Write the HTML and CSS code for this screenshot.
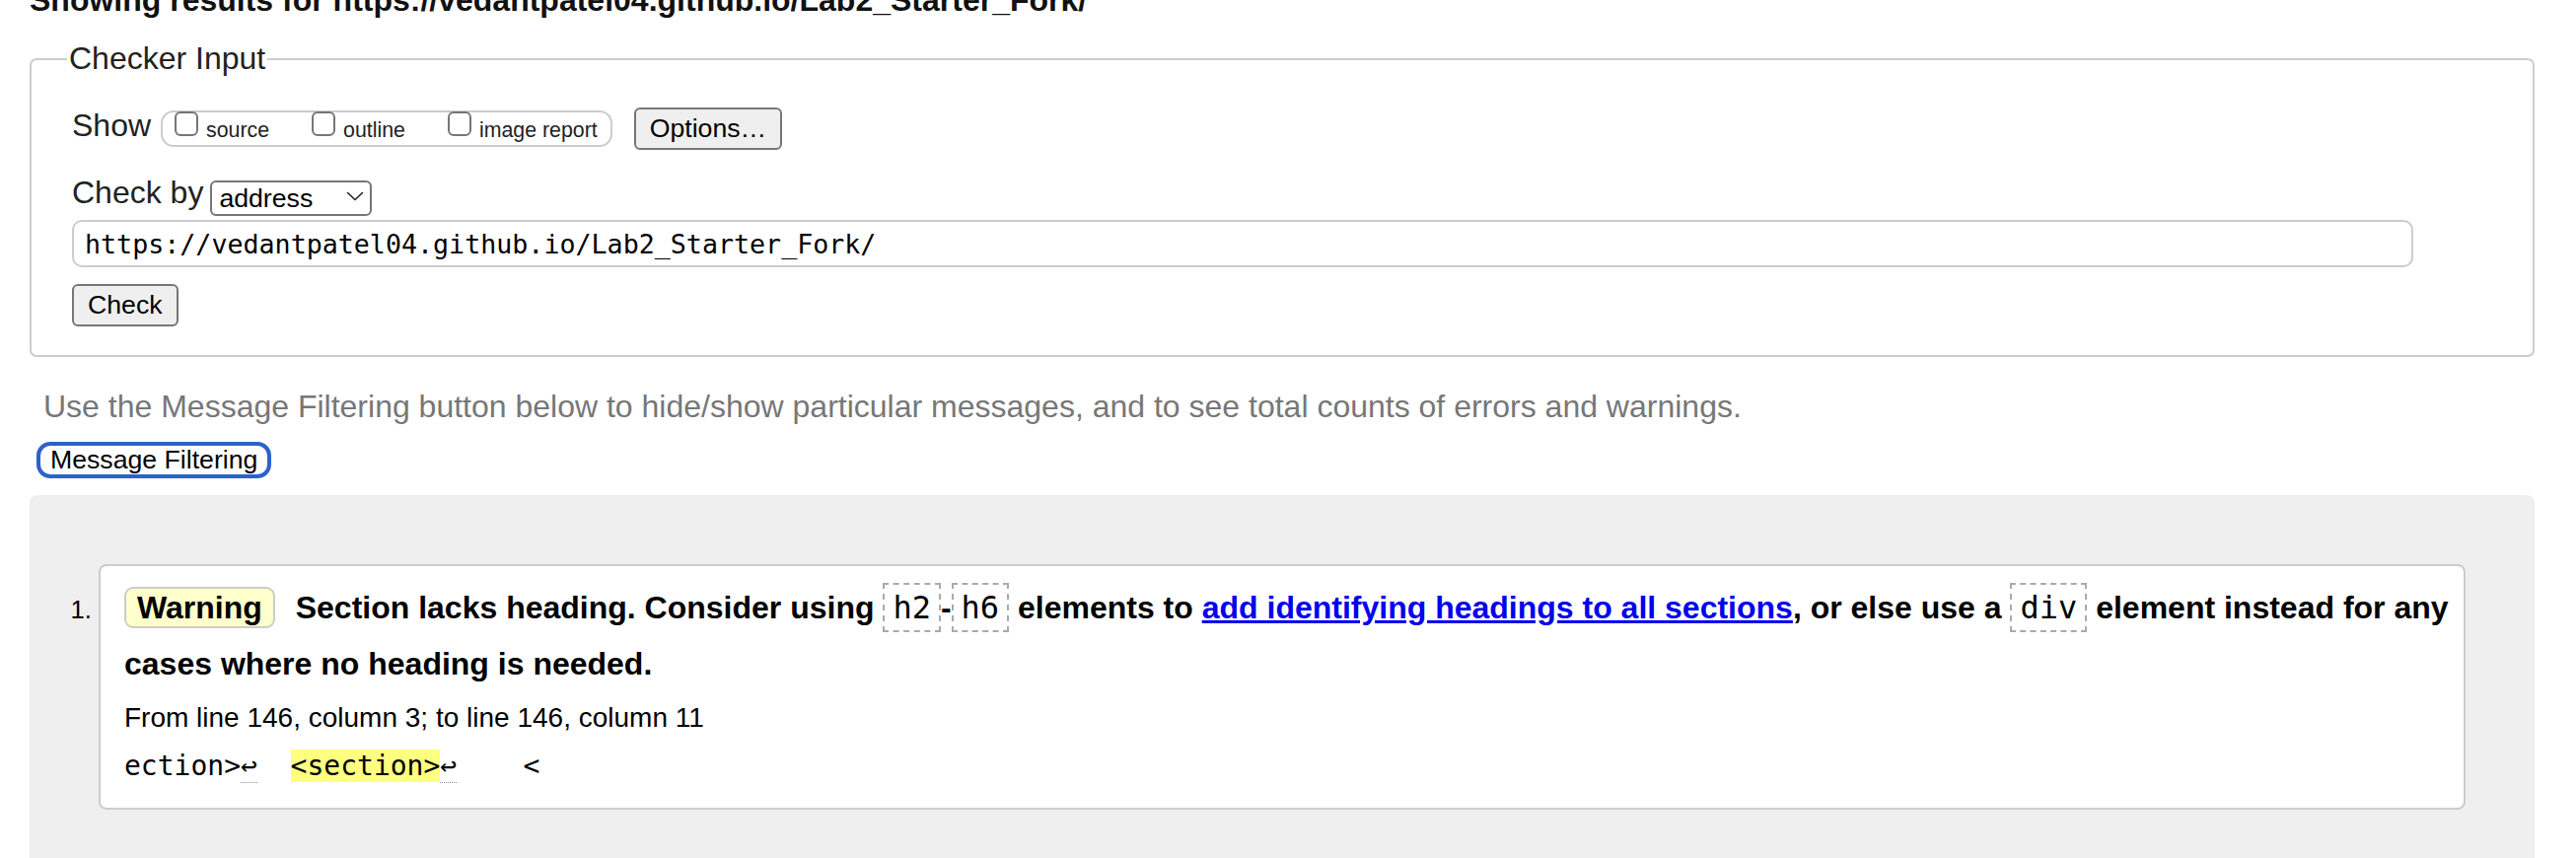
FILE: index.html
```html
<!DOCTYPE html>
<html lang="en">
<head>
<meta charset="utf-8">
<title>Showing results for https://vedantpatel04.github.io/Lab2_Starter_Fork/ - Nu Html Checker</title>
<link rel="stylesheet" href="styles.css">
</head>
<body>
<main class="page">
  <h2 class="results-title">Showing results for https://vedantpatel04.github.io/Lab2_Starter_Fork/</h2>
  <form class="checker-form">
    <fieldset class="checker">
      <legend class="checker-legend">Checker Input</legend>
      <div class="row row-show">
        <span class="row-label label-show">Show</span>
        <span class="show-opts">
          <label class="opt"><input type="checkbox" class="cb"><span class="opt-text">source</span></label>
          <label class="opt"><input type="checkbox" class="cb"><span class="opt-text">outline</span></label>
          <label class="opt"><input type="checkbox" class="cb"><span class="opt-text">image report</span></label>
        </span>
        <button type="button" class="btn btn-options">Options…</button>
      </div>
      <div class="row row-checkby">
        <span class="row-label label-checkby">Check by</span>
        <span class="select-wrap">
          <select class="select"><option>address</option><option>file upload</option><option>text input</option></select>
          <svg class="chevron" width="18" height="10" viewBox="0 0 18 10" aria-hidden="true"><path d="M1.5 1.5 L9 8.5 L16.5 1.5" fill="none" stroke="#222" stroke-width="1.6" stroke-linecap="round" stroke-linejoin="round"/></svg>
        </span>
      </div>
      <input class="url" type="url" value="https://vedantpatel04.github.io/Lab2_Starter_Fork/">
      <div class="row row-submit">
        <button type="button" class="btn btn-check">Check</button>
      </div>
    </fieldset>
  </form>
  <p class="hint">Use the Message Filtering button below to hide/show particular messages, and to see total counts of errors and warnings.</p>
  <button type="button" class="btn-filter">Message Filtering</button>
  <div class="results">
    <ol class="messages">
      <li class="msg">
        <p class="msg-text"><span class="badge">Warning</span> Section lacks heading. Consider using <code class="tag">h2</code>-<code class="tag">h6</code> elements to <a class="msg-link" href="#">add identifying headings to all sections</a>, or else use a <code class="tag">div</code> element instead for any cases where no heading is needed.</p>
        <p class="location">From line 146, column 3; to line 146, column 11</p>
        <p class="extract">ection&gt;<span class="lf">↩</span>  <mark class="hl">&lt;section&gt;</mark><span class="lf">↩</span>    &lt;</p>
      </li>
    </ol>
  </div>
</main>
</body>
</html>
```

FILE: styles.css
```css
html, body {
  margin: 0;
  padding: 0;
  background: #fff;
}

body {
  font-family: "Liberation Sans", Arial, Helvetica, sans-serif;
  font-size: 32px;
  color: #000;
  overflow: hidden;
}

.page {
  padding: 0 42px 0 30px;
}

.results-title {
  margin: -18px 0 0 0;
  font-size: 32px;
  line-height: 37px;
  font-weight: bold;
  color: #111;
  white-space: nowrap;
}

.checker-form {
  margin: 22px 0 0 0;
}

.checker {
  margin: 0;
  min-width: 0;
  border: 2px solid #ccc;
  border-radius: 7px;
  padding: 31px 121px 29px 41px;
}

.checker-legend {
  margin-left: -5px;
  padding: 0 2px;
  font-size: 32px;
  line-height: 37px;
  color: #222;
}

.row {
  display: flex;
  align-items: flex-start;
}

.row-label {
  font-size: 32px;
  color: #222;
}

.label-show {
  line-height: 37px;
  margin-top: 0;
  margin-right: 10px;
}

.row-show {
  height: 43px;
}

.show-opts {
  display: inline-flex;
  align-items: flex-start;
  box-sizing: border-box;
  height: 37px;
  margin-top: 3px;
  padding: 0 13px 0 12px;
  border: 2px solid #ccc;
  border-radius: 13px;
}

.opt {
  display: flex;
  align-items: flex-start;
  margin-right: 43px;
}

.opt:last-child {
  margin-right: 0;
}

.cb {
  appearance: none;
  -webkit-appearance: none;
  box-sizing: border-box;
  width: 24px;
  height: 25px;
  margin: -1px 8px 0 0;
  border: 2px solid #767676;
  border-radius: 6px;
  background: #fff;
}

.opt-text {
  font-size: 21.33px;
  line-height: 24px;
  margin-top: 6px;
  color: #222;
}

.btn {
  box-sizing: border-box;
  height: 43px;
  margin: 0;
  border: 2px solid #767676;
  border-radius: 6px;
  background: #efefef;
  color: #000;
  font-family: "Liberation Sans", Arial, Helvetica, sans-serif;
  font-size: 26.67px;
  line-height: 37px;
}

.btn-options {
  margin-left: 22px;
  padding: 0 14px;
}

.row-checkby {
  margin-top: 29px;
}

.label-checkby {
  line-height: 36px;
  margin-top: -4px;
  margin-right: 7px;
}

.select-wrap {
  position: relative;
  display: inline-block;
  height: 36px;
}

.select {
  appearance: none;
  -webkit-appearance: none;
  box-sizing: border-box;
  width: 164px;
  height: 36px;
  margin: 0;
  padding: 0 0 0 7px;
  border: 2px solid #767676;
  border-radius: 6px;
  background: #fff;
  color: #000;
  font-family: "Liberation Sans", Arial, Helvetica, sans-serif;
  font-size: 26.67px;
  line-height: 32px;
}

.chevron {
  position: absolute;
  left: 138px;
  top: 13px;
  pointer-events: none;
}

.url {
  display: block;
  box-sizing: border-box;
  width: 100%;
  height: 48px;
  margin: 6px 0 0 0;
  padding: 0 11px;
  border: 2px solid #ccc;
  border-radius: 10px;
  background: #fff;
  color: #000;
  font-family: "DejaVu Sans Mono", "Liberation Mono", monospace;
  font-size: 26.67px;
}

.row-submit {
  margin-top: 17px;
}

.btn-check {
  padding: 0 14px;
}

.hint {
  margin: 32px 0 0 0;
  padding-left: 14px;
  font-size: 32px;
  line-height: 37px;
  color: #777;
  white-space: nowrap;
}

.btn-filter {
  display: block;
  box-sizing: border-box;
  height: 37px;
  margin: 17px 0 0 7px;
  padding: 0 10px;
  border: 4px solid #2c62cb;
  border-radius: 14px;
  background: #fff;
  color: #000;
  font-family: "Liberation Sans", Arial, Helvetica, sans-serif;
  font-size: 26.67px;
  line-height: 29px;
}

.results {
  margin-top: 17px;
  padding: 70px 70px 120px 70px;
  background: #efefef;
  border-radius: 8px 8px 0 0;
}

.messages {
  margin: 0;
  padding: 0;
  list-style: decimal outside;
}

.msg {
  background: #fff;
  border: 2px solid #ccc;
  border-radius: 8px;
  padding: 14px 8px 22px 24px;
  font-size: 25.6px;
  color: #000;
}

.msg-text {
  margin: 0;
  font-size: 32px;
  line-height: 57px;
  font-weight: bold;
}

.badge {
  display: inline-block;
  margin-right: 12px;
  padding: 1px 11px;
  border: 2px solid #ccc;
  border-radius: 9px;
  background: #ffffcc;
  line-height: 36px;
}

.tag {
  font-family: "DejaVu Sans Mono", "Liberation Mono", monospace;
  font-weight: normal;
  font-size: 32px;
  padding: 4px 8px;
  border: 2px dashed #aaa;
}

.msg-link {
  color: #0000ee;
  text-decoration: underline;
}

.location {
  margin: 6px 0 0 0;
  font-size: 28px;
  line-height: 40px;
}

.extract {
  margin: 9px 0 0 0;
  font-family: "DejaVu Sans Mono", "Liberation Mono", monospace;
  font-size: 28px;
  line-height: 40px;
  white-space: pre;
}

.hl {
  background: #ffff80;
  color: #000;
}

.lf {
  border-bottom: 1px dotted #888;
}
```
